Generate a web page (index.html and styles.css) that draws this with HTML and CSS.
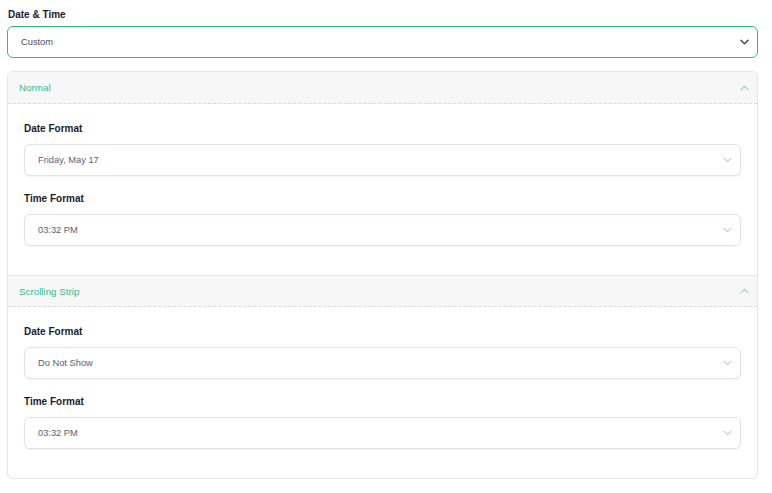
FILE: index.html
```html
<!DOCTYPE html>
<html>
<head>
<meta charset="utf-8">
<link rel="stylesheet" href="styles.css">
</head>
<body>
<div class="page">
  <div class="title">Date &amp; Time</div>
  <div class="select select-main">
    <span>Custom</span>
    <svg class="chev" width="9" height="6" viewBox="0 0 9 6"><path d="M1 1.2l3.5 3.5 3.5-3.5" fill="none" stroke="#4a4a55" stroke-width="1.5" stroke-linecap="round" stroke-linejoin="round"/></svg>
  </div>
  <div class="card">
    <div class="sec-head">
      <span>Normal</span>
      <svg class="chev" width="9" height="6" viewBox="0 0 9 6"><path d="M1 4.8l3.5-3.5 3.5 3.5" fill="none" stroke="#a8dfc6" stroke-width="1.4" stroke-linecap="round" stroke-linejoin="round"/></svg>
    </div>
    <div class="sec-body">
      <div class="group">
        <div class="label">Date Format</div>
        <div class="select"><span>Friday, May 17</span><svg class="chev" width="9" height="6" viewBox="0 0 9 6"><path d="M1 1.2l3.5 3.5 3.5-3.5" fill="none" stroke="#c6c6ce" stroke-width="1.1" stroke-linecap="round" stroke-linejoin="round"/></svg></div>
      </div>
      <div class="group">
        <div class="label">Time Format</div>
        <div class="select"><span>03:32 PM</span><svg class="chev" width="9" height="6" viewBox="0 0 9 6"><path d="M1 1.2l3.5 3.5 3.5-3.5" fill="none" stroke="#c6c6ce" stroke-width="1.1" stroke-linecap="round" stroke-linejoin="round"/></svg></div>
      </div>
    </div>
    <div class="sec-head sec-head-2">
      <span>Scrolling Strip</span>
      <svg class="chev" width="9" height="6" viewBox="0 0 9 6"><path d="M1 4.8l3.5-3.5 3.5 3.5" fill="none" stroke="#a8dfc6" stroke-width="1.4" stroke-linecap="round" stroke-linejoin="round"/></svg>
    </div>
    <div class="sec-body">
      <div class="group">
        <div class="label">Date Format</div>
        <div class="select"><span>Do Not Show</span><svg class="chev" width="9" height="6" viewBox="0 0 9 6"><path d="M1 1.2l3.5 3.5 3.5-3.5" fill="none" stroke="#c6c6ce" stroke-width="1.1" stroke-linecap="round" stroke-linejoin="round"/></svg></div>
      </div>
      <div class="group">
        <div class="label">Time Format</div>
        <div class="select"><span>03:32 PM</span><svg class="chev" width="9" height="6" viewBox="0 0 9 6"><path d="M1 1.2l3.5 3.5 3.5-3.5" fill="none" stroke="#c6c6ce" stroke-width="1.1" stroke-linecap="round" stroke-linejoin="round"/></svg></div>
      </div>
    </div>
  </div>
</div>
</body>
</html>
```

FILE: styles.css
```css
* { box-sizing: border-box; }
html, body { margin: 0; padding: 0; background: #fff; }
body {
  font-family: "Liberation Sans", Arial, sans-serif;
  font-size: 10px;
  color: #1b1b2f;
}
.page {
  width: 772px;
  padding: 9px 14px 0 7px;
}
.title {
  font-weight: 700;
  font-size: 10px;
  line-height: 12px;
  padding-left: 1px;
  margin-bottom: 5px;
  color: #1b1b2f;
}
.select {
  height: 32px;
  border: 1px solid #e1e1ea;
  border-radius: 6px;
  display: flex;
  align-items: center;
  justify-content: space-between;
  padding: 0 8px 0 13px;
  color: #5e5c78;
  font-size: 9.3px;
  background: #fff;
  box-shadow: 0 1px 2px rgba(0,0,0,0.05);
}
.select-main {
  border: 1px solid #2cbf7c;
  box-shadow: none;
  padding: 0 8px 0 13px;
  color: #4d4b65;
}
.card {
  margin-top: 13px;
  border: 1px solid #e4e4e9;
  border-radius: 6px;
  overflow: hidden;
}
.sec-head {
  height: 32px;
  background: #f7f7f7;
  border-bottom: 1px dashed #d9d9e0;
  display: flex;
  align-items: center;
  justify-content: space-between;
  padding: 0 8px 0 11px;
  color: #2dbf8a;
  font-size: 9.8px;
}
.sec-head-2 {
  border-top: 1px solid #e4e4e9;
}
.sec-body {
  display: flex;
  flex-direction: column;
  gap: 17px;
  padding: 19px 16px 29px 16px;
}
.label {
  font-weight: 700;
  font-size: 10px;
  line-height: 12px;
  margin-bottom: 9px;
  color: #1b1b2f;
}
.chev { display: block; }
```
